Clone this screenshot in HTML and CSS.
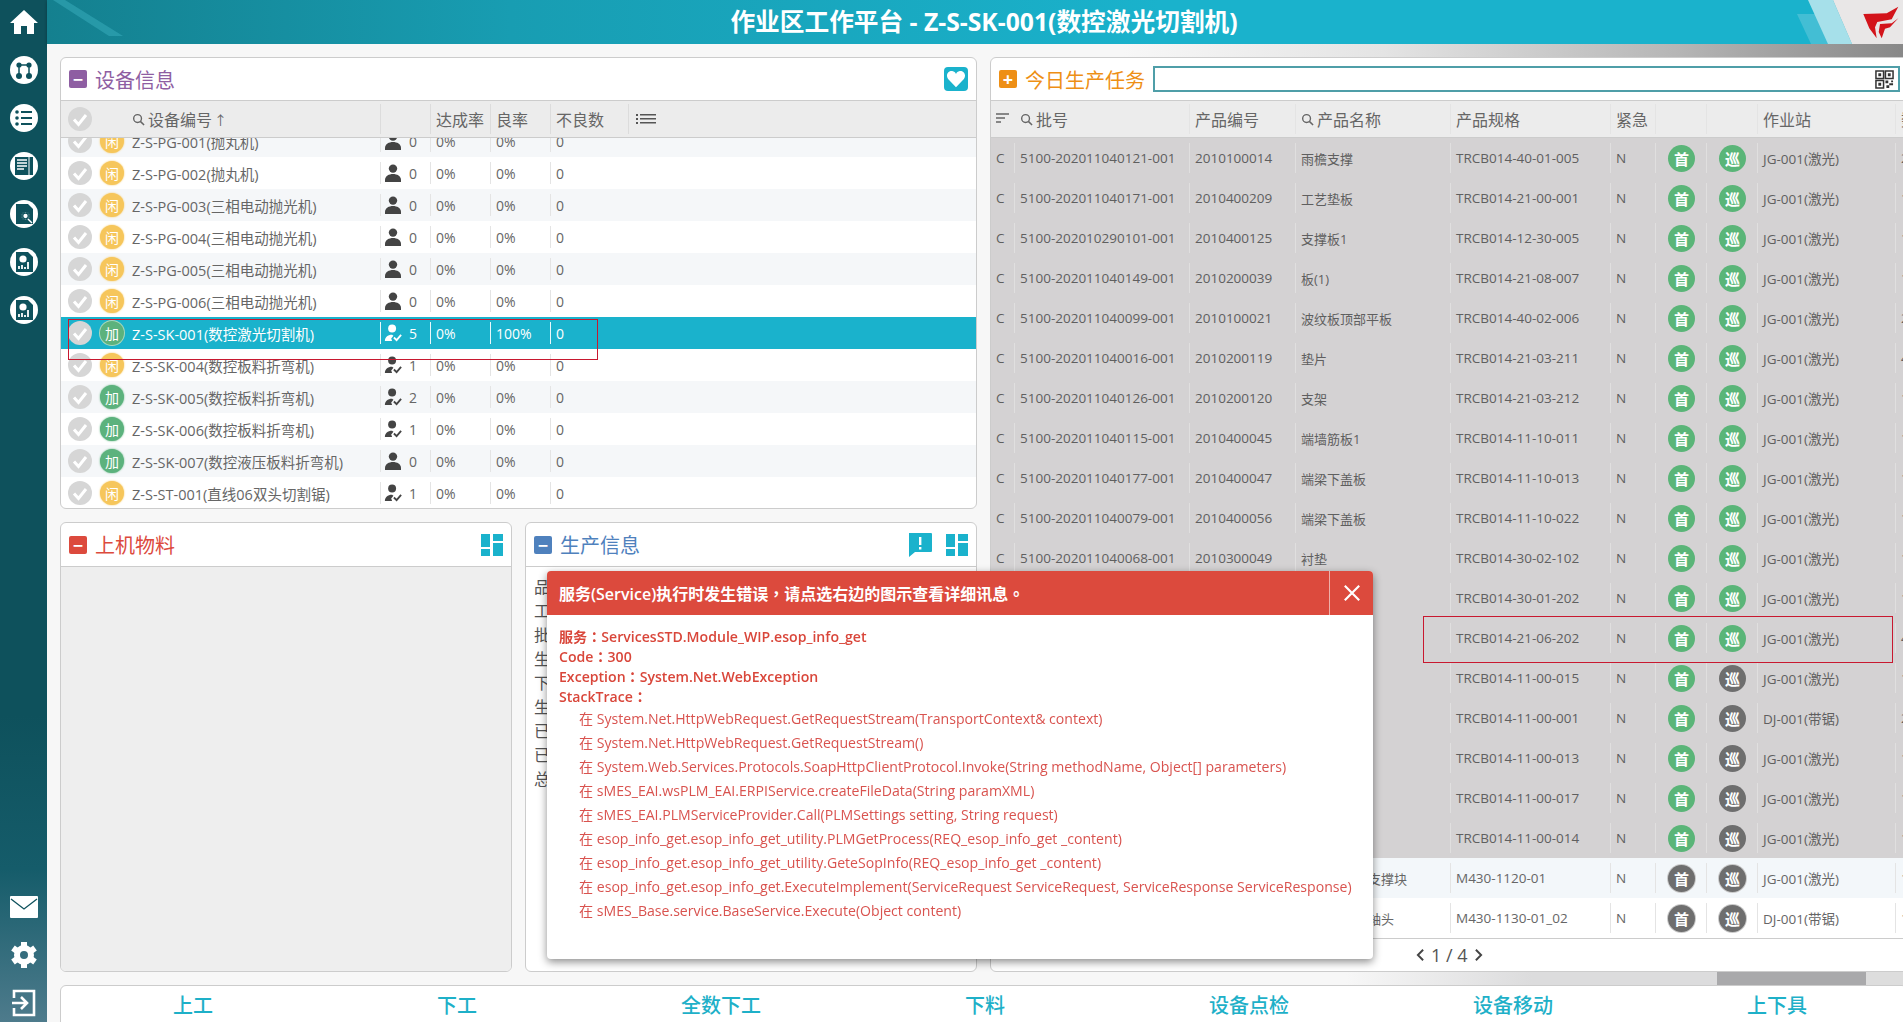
FILE: index.html
```html
<!DOCTYPE html>
<html lang="zh-CN">
<head>
  <meta charset="UTF-8">
  <title>作业区工作平台</title>
  <link rel="stylesheet" href="styles.css">
</head>
<body>
  <svg class="icon-defs" width="0" height="0">
    <symbol id="i-search" viewBox="0 0 14 14"><circle cx="6" cy="6" r="4.2" fill="none" stroke="currentColor" stroke-width="1.5"/><path d="M9 9l4 4" stroke="currentColor" stroke-width="1.6"/></symbol>
    <symbol id="i-check" viewBox="0 0 24 24"><circle cx="12" cy="12" r="12" fill="#d6d6d6"/><path d="M6 12.5l4.5 5L18 8" fill="none" stroke="#fff" stroke-width="3"/></symbol>
    <symbol id="i-person" viewBox="0 0 18 18"><circle cx="9" cy="4.6" r="4.2" fill="currentColor"/><path d="M1 18v-2c0-4 4-6 8-6s8 2 8 6v2z" fill="currentColor"/></symbol>
    <symbol id="i-person-ok" viewBox="0 0 20 20"><circle cx="9" cy="5" r="4.4" fill="currentColor"/><path d="M1 19c0-4 3-7 8-7l1.500 1-2.500 3 1 3z" fill="currentColor"/><path d="M11 15l3 3 5-6" fill="none" stroke="currentColor" stroke-width="2"/></symbol>
    <symbol id="i-dash" viewBox="0 0 22 22"><path d="M0 0h9v13H0zM12 0h10v7H12zM0 15h9v7H0zM12 9h10v13H12z" fill="currentColor"/></symbol>
    <symbol id="i-list" viewBox="0 0 20 12"><path d="M0 1h2v2H0zM4 1h16v1.400H4zM0 5h2v2H0zM4 5h16v1.400H4zM0 9h2v2H0zM4 9h16v1.400H4z" fill="currentColor"/></symbol>
  </svg>

  <aside class="sidebar">
    <nav class="side-group">
      <a class="side-item"><svg viewBox="0 0 28 28"><path d="M14 2L0 15h4v11h7v-8h6v8h7V15h4z" fill="#fff"/></svg></a>
      <a class="side-item"><svg viewBox="0 0 28 28"><circle cx="14" cy="14" r="14" fill="#fff"/><circle cx="9" cy="9" r="2.600" fill="#0e515c"/><circle cx="19" cy="9" r="2.600" fill="#0e515c"/><circle cx="9" cy="20" r="3" fill="#0e515c"/><circle cx="19" cy="20" r="3" fill="#0e515c"/><path d="M9 9h10M9 9v11M19 9v11" stroke="#0e515c" stroke-width="1.500"/></svg></a>
      <a class="side-item"><svg viewBox="0 0 28 28"><circle cx="14" cy="14" r="14" fill="#fff"/><path d="M11 8h11M11 14h11M11 20h11" stroke="#0e515c" stroke-width="2.200"/><circle cx="7" cy="8" r="1.800" fill="#0e515c"/><circle cx="7" cy="14" r="1.800" fill="#0e515c"/><circle cx="7" cy="20" r="1.800" fill="#0e515c"/></svg></a>
      <a class="side-item"><svg viewBox="0 0 28 28"><circle cx="14" cy="14" r="14" fill="#fff"/><path d="M5 5h18v18H5z" fill="#0e515c"/><path d="M7 8h10M7 11h10M7 14h10M7 17h7" stroke="#fff" stroke-width="1.300"/><path d="M19 5v18" stroke="#fff" stroke-width="1"/></svg></a>
      <a class="side-item"><svg viewBox="0 0 28 28"><circle cx="14" cy="14" r="14" fill="#fff"/><path d="M6 4h12l5 5v15H6z" fill="#0e515c"/><circle cx="15.500" cy="16" r="4" fill="#fff" stroke="#0e515c" stroke-width="1"/><circle cx="15.500" cy="16" r="2.800" fill="none" stroke="#0e515c" stroke-width="1.300"/><path d="M18 19l4 4" stroke="#fff" stroke-width="1.500"/></svg></a>
      <a class="side-item"><svg viewBox="0 0 28 28"><circle cx="14" cy="14" r="14" fill="#fff"/><path d="M6 4h12l5 5v15H6z" fill="#0e515c"/><circle cx="13" cy="11" r="3.600" fill="#fff"/><path d="M9 21v-3M12 21v-4M15 21v-2M18 21v-7" stroke="#fff" stroke-width="1.800"/></svg></a>
      <a class="side-item"><svg viewBox="0 0 28 28"><circle cx="14" cy="14" r="14" fill="#fff"/><path d="M6 4h12l5 5v15H6z" fill="#0e515c"/><circle cx="13" cy="11" r="3.600" fill="#fff"/><path d="M9 21v-3M12 21v-4M15 21v-2M18 21v-7" stroke="#fff" stroke-width="1.800"/></svg></a>
    </nav>
    <nav class="side-group">
      <a class="side-item"><svg viewBox="0 0 28 28"><path d="M0 4q0-1 1-1h26q1 0 1 1v20q0 1-1 1H1q-1 0-1-1z" fill="#fff"/><path d="M1 6l13 10L27 6" fill="none" stroke="#0e515c" stroke-width="1.300"/></svg></a>
      <a class="side-item"><svg viewBox="0 0 28 28"><circle cx="14" cy="14" r="7" fill="none" stroke="#fff" stroke-width="6"/><path d="M14 1v5M14 22v5M3 7l4 3M21 18l4 3M3 21l4-3M21 10l4-3" stroke="#fff" stroke-width="6"/></svg></a>
      <a class="side-item"><svg viewBox="0 0 28 28"><path d="M4 9V2h20v24H4v-7" fill="none" stroke="#fff" stroke-width="2.600"/><path d="M2 14h14M11 8l6 6-6 6" fill="none" stroke="#fff" stroke-width="2.600"/></svg></a>
    </nav>
  </aside>

  <div class="main">
    <header class="topbar">
      <svg class="topbar-art" width="1856" height="44" viewBox="0 0 1856 44">
        <path d="M6 0h12l58 36h-14z" fill="#3fb4c4" opacity=".45"/>
        <path d="M1750 14l14 30h36l-20-30z" fill="#5fc6d8" opacity=".6"/>
        <path d="M1761 0h25l19 44h-24z" fill="#a6e0ea"/>
        <path d="M1786 0h70v44h-51z" fill="#e9e7e7"/>
        <path d="M1816.300 14l23.400-.7 11.600-6.600-6.600 12.600-14.400 2.700-2.300 5.300 1.700 11-7.400-10z" fill="#d3141b"/>
        <path d="M1833 24l11.700-.7 6.600-5-8.300 9-5 1.400-3.300 9.600-3-6.300z" fill="#d3141b"/>
      </svg>
      <h1 class="topbar-title">作业区工作平台 - Z-S-SK-001(数控激光切割机)</h1>
    </header>

    <div class="content">
      <section class="panel panel-equip">
        <div class="panel-head">
          <span class="square sq-purple">−</span>
          <h2 class="panel-title t-purple">设备信息</h2>
          <span class="head-tools">
            <span class="heart-btn"><svg viewBox="0 0 24 24" width="20" height="20"><path d="M12 22L2.500 12C-1 7 3 2 7.500 2.500 10 3 11 4 12 6c1-2 2-3 4.500-3.500C21 2 25 7 21.500 12z" fill="#fff"/></svg></span>
          </span>
        </div>
        <div class="eq-row eq-thead">
          <div class="eq-main"><svg class="check-icon"><use href="#i-check"/></svg><span class="eq-sort"><svg class="search-icon"><use href="#i-search"/></svg>设备编号<span class="sort-arrow">↑</span></span></div>
          <div class="cell"></div>
          <div class="cell">达成率</div>
          <div class="cell">良率</div>
          <div class="cell">不良数</div>
          <div class="cell"><svg class="list-icon"><use href="#i-list"/></svg></div>
        </div>
        <div class="eq-body">
          <div class="eq-row"><div class="eq-main"><svg class="check-icon"><use href="#i-check"/></svg><span class="status st-idle">闲</span>Z-S-PG-001(抛丸机)</div><div class="cell"><svg class="person"><use href="#i-person"/></svg>0</div><div class="cell">0%</div><div class="cell">0%</div><div class="cell">0</div></div>
          <div class="eq-row"><div class="eq-main"><svg class="check-icon"><use href="#i-check"/></svg><span class="status st-idle">闲</span>Z-S-PG-002(抛丸机)</div><div class="cell"><svg class="person"><use href="#i-person"/></svg>0</div><div class="cell">0%</div><div class="cell">0%</div><div class="cell">0</div></div>
          <div class="eq-row"><div class="eq-main"><svg class="check-icon"><use href="#i-check"/></svg><span class="status st-idle">闲</span>Z-S-PG-003(三相电动抛光机)</div><div class="cell"><svg class="person"><use href="#i-person"/></svg>0</div><div class="cell">0%</div><div class="cell">0%</div><div class="cell">0</div></div>
          <div class="eq-row"><div class="eq-main"><svg class="check-icon"><use href="#i-check"/></svg><span class="status st-idle">闲</span>Z-S-PG-004(三相电动抛光机)</div><div class="cell"><svg class="person"><use href="#i-person"/></svg>0</div><div class="cell">0%</div><div class="cell">0%</div><div class="cell">0</div></div>
          <div class="eq-row"><div class="eq-main"><svg class="check-icon"><use href="#i-check"/></svg><span class="status st-idle">闲</span>Z-S-PG-005(三相电动抛光机)</div><div class="cell"><svg class="person"><use href="#i-person"/></svg>0</div><div class="cell">0%</div><div class="cell">0%</div><div class="cell">0</div></div>
          <div class="eq-row"><div class="eq-main"><svg class="check-icon"><use href="#i-check"/></svg><span class="status st-idle">闲</span>Z-S-PG-006(三相电动抛光机)</div><div class="cell"><svg class="person"><use href="#i-person"/></svg>0</div><div class="cell">0%</div><div class="cell">0%</div><div class="cell">0</div></div>
          <div class="eq-row selected"><div class="eq-main"><svg class="check-icon"><use href="#i-check"/></svg><span class="status st-work">加</span>Z-S-SK-001(数控激光切割机)</div><div class="cell"><svg class="person"><use href="#i-person-ok"/></svg>5</div><div class="cell">0%</div><div class="cell">100%</div><div class="cell">0</div></div>
          <div class="eq-row"><div class="eq-main"><svg class="check-icon"><use href="#i-check"/></svg><span class="status st-idle">闲</span>Z-S-SK-004(数控板料折弯机)</div><div class="cell"><svg class="person"><use href="#i-person-ok"/></svg>1</div><div class="cell">0%</div><div class="cell">0%</div><div class="cell">0</div></div>
          <div class="eq-row"><div class="eq-main"><svg class="check-icon"><use href="#i-check"/></svg><span class="status st-work">加</span>Z-S-SK-005(数控板料折弯机)</div><div class="cell"><svg class="person"><use href="#i-person-ok"/></svg>2</div><div class="cell">0%</div><div class="cell">0%</div><div class="cell">0</div></div>
          <div class="eq-row"><div class="eq-main"><svg class="check-icon"><use href="#i-check"/></svg><span class="status st-work">加</span>Z-S-SK-006(数控板料折弯机)</div><div class="cell"><svg class="person"><use href="#i-person-ok"/></svg>1</div><div class="cell">0%</div><div class="cell">0%</div><div class="cell">0</div></div>
          <div class="eq-row"><div class="eq-main"><svg class="check-icon"><use href="#i-check"/></svg><span class="status st-work">加</span>Z-S-SK-007(数控液压板料折弯机)</div><div class="cell"><svg class="person"><use href="#i-person"/></svg>0</div><div class="cell">0%</div><div class="cell">0%</div><div class="cell">0</div></div>
          <div class="eq-row"><div class="eq-main"><svg class="check-icon"><use href="#i-check"/></svg><span class="status st-idle">闲</span>Z-S-ST-001(直线06双头切割锯)</div><div class="cell"><svg class="person"><use href="#i-person-ok"/></svg>1</div><div class="cell">0%</div><div class="cell">0%</div><div class="cell">0</div></div>
        </div>
      </section>

      <section class="panel panel-tasks">
        <div class="panel-head">
          <span class="square sq-orange">+</span>
          <h2 class="panel-title t-orange">今日生产任务</h2>
          <div class="scan-box">
            <svg class="qr-icon" viewBox="0 0 20 20" width="19" height="19"><path d="M1 1h8v8H1zM11 1h8v8h-8zM1 11h8v8H1z" fill="none" stroke="#333" stroke-width="1.600"/><path d="M3.500 3.500h3v3h-3zM13.500 3.500h3v3h-3zM3.500 13.500h3v3h-3zM11 11h3v3h-3zM15 14h4v2h-4zM12 16h3v3h-3zM17 11h2v2h-2z" fill="#333"/></svg>
          </div>
        </div>
        <div class="task-row task-thead">
          <div class="task-first"><svg class="sort-icon" viewBox="0 0 14 12" width="14" height="12"><path d="M0 1h13M0 5h9M0 9h5" stroke="#666" stroke-width="1.500"/></svg><svg class="search-icon"><use href="#i-search"/></svg>批号</div>
          <div class="cell">产品编号</div>
          <div class="cell"><svg class="search-icon"><use href="#i-search"/></svg>产品名称</div>
          <div class="cell">产品规格</div>
          <div class="cell">紧急</div>
          <div class="cell"></div>
          <div class="cell"></div>
          <div class="cell">作业站</div>
          <div class="cell">数</div>
        </div>
        <div class="task-body">
          <div class="task-row done"><div class="first">C</div><div class="cell">5100-202011040121-001</div><div class="cell">2010100014</div><div class="cell">雨檐支撑</div><div class="cell">TRCB014-40-01-005</div><div class="cell">N</div><div class="cell"><span class="badge b-green">首</span></div><div class="cell"><span class="badge b-green">巡</span></div><div class="cell">JG-001(激光)</div><div class="cell">2</div></div>
          <div class="task-row done"><div class="first">C</div><div class="cell">5100-202011040171-001</div><div class="cell">2010400209</div><div class="cell">工艺垫板</div><div class="cell">TRCB014-21-00-001</div><div class="cell">N</div><div class="cell"><span class="badge b-green">首</span></div><div class="cell"><span class="badge b-green">巡</span></div><div class="cell">JG-001(激光)</div><div class="cell">1</div></div>
          <div class="task-row done"><div class="first">C</div><div class="cell">5100-202010290101-001</div><div class="cell">2010400125</div><div class="cell">支撑板1</div><div class="cell">TRCB014-12-30-005</div><div class="cell">N</div><div class="cell"><span class="badge b-green">首</span></div><div class="cell"><span class="badge b-green">巡</span></div><div class="cell">JG-001(激光)</div><div class="cell">1</div></div>
          <div class="task-row done"><div class="first">C</div><div class="cell">5100-202011040149-001</div><div class="cell">2010200039</div><div class="cell">板(1)</div><div class="cell">TRCB014-21-08-007</div><div class="cell">N</div><div class="cell"><span class="badge b-green">首</span></div><div class="cell"><span class="badge b-green">巡</span></div><div class="cell">JG-001(激光)</div><div class="cell">1</div></div>
          <div class="task-row done"><div class="first">C</div><div class="cell">5100-202011040099-001</div><div class="cell">2010100021</div><div class="cell">波纹板顶部平板</div><div class="cell">TRCB014-40-02-006</div><div class="cell">N</div><div class="cell"><span class="badge b-green">首</span></div><div class="cell"><span class="badge b-green">巡</span></div><div class="cell">JG-001(激光)</div><div class="cell">2</div></div>
          <div class="task-row done"><div class="first">C</div><div class="cell">5100-202011040016-001</div><div class="cell">2010200119</div><div class="cell">垫片</div><div class="cell">TRCB014-21-03-211</div><div class="cell">N</div><div class="cell"><span class="badge b-green">首</span></div><div class="cell"><span class="badge b-green">巡</span></div><div class="cell">JG-001(激光)</div><div class="cell">4</div></div>
          <div class="task-row done"><div class="first">C</div><div class="cell">5100-202011040126-001</div><div class="cell">2010200120</div><div class="cell">支架</div><div class="cell">TRCB014-21-03-212</div><div class="cell">N</div><div class="cell"><span class="badge b-green">首</span></div><div class="cell"><span class="badge b-green">巡</span></div><div class="cell">JG-001(激光)</div><div class="cell">1</div></div>
          <div class="task-row done"><div class="first">C</div><div class="cell">5100-202011040115-001</div><div class="cell">2010400045</div><div class="cell">端墙筋板1</div><div class="cell">TRCB014-11-10-011</div><div class="cell">N</div><div class="cell"><span class="badge b-green">首</span></div><div class="cell"><span class="badge b-green">巡</span></div><div class="cell">JG-001(激光)</div><div class="cell">1</div></div>
          <div class="task-row done"><div class="first">C</div><div class="cell">5100-202011040177-001</div><div class="cell">2010400047</div><div class="cell">端梁下盖板</div><div class="cell">TRCB014-11-10-013</div><div class="cell">N</div><div class="cell"><span class="badge b-green">首</span></div><div class="cell"><span class="badge b-green">巡</span></div><div class="cell">JG-001(激光)</div><div class="cell">1</div></div>
          <div class="task-row done"><div class="first">C</div><div class="cell">5100-202011040079-001</div><div class="cell">2010400056</div><div class="cell">端梁下盖板</div><div class="cell">TRCB014-11-10-022</div><div class="cell">N</div><div class="cell"><span class="badge b-green">首</span></div><div class="cell"><span class="badge b-green">巡</span></div><div class="cell">JG-001(激光)</div><div class="cell">1</div></div>
          <div class="task-row done"><div class="first">C</div><div class="cell">5100-202011040068-001</div><div class="cell">2010300049</div><div class="cell">衬垫</div><div class="cell">TRCB014-30-02-102</div><div class="cell">N</div><div class="cell"><span class="badge b-green">首</span></div><div class="cell"><span class="badge b-green">巡</span></div><div class="cell">JG-001(激光)</div><div class="cell">1</div></div>
          <div class="task-row done"><div class="first"></div><div class="cell"></div><div class="cell"></div><div class="cell"></div><div class="cell">TRCB014-30-01-202</div><div class="cell">N</div><div class="cell"><span class="badge b-green">首</span></div><div class="cell"><span class="badge b-green">巡</span></div><div class="cell">JG-001(激光)</div><div class="cell">1</div></div>
          <div class="task-row done"><div class="first"></div><div class="cell"></div><div class="cell"></div><div class="cell"></div><div class="cell">TRCB014-21-06-202</div><div class="cell">N</div><div class="cell"><span class="badge b-green">首</span></div><div class="cell"><span class="badge b-green">巡</span></div><div class="cell">JG-001(激光)</div><div class="cell">4</div></div>
          <div class="task-row done"><div class="first"></div><div class="cell"></div><div class="cell"></div><div class="cell"></div><div class="cell">TRCB014-11-00-015</div><div class="cell">N</div><div class="cell"><span class="badge b-green">首</span></div><div class="cell"><span class="badge b-gray">巡</span></div><div class="cell">JG-001(激光)</div><div class="cell">1</div></div>
          <div class="task-row done"><div class="first"></div><div class="cell"></div><div class="cell"></div><div class="cell"></div><div class="cell">TRCB014-11-00-001</div><div class="cell">N</div><div class="cell"><span class="badge b-green">首</span></div><div class="cell"><span class="badge b-gray">巡</span></div><div class="cell">DJ-001(带锯)</div><div class="cell">2</div></div>
          <div class="task-row done"><div class="first"></div><div class="cell"></div><div class="cell"></div><div class="cell"></div><div class="cell">TRCB014-11-00-013</div><div class="cell">N</div><div class="cell"><span class="badge b-green">首</span></div><div class="cell"><span class="badge b-gray">巡</span></div><div class="cell">JG-001(激光)</div><div class="cell">1</div></div>
          <div class="task-row done"><div class="first"></div><div class="cell"></div><div class="cell"></div><div class="cell"></div><div class="cell">TRCB014-11-00-017</div><div class="cell">N</div><div class="cell"><span class="badge b-green">首</span></div><div class="cell"><span class="badge b-gray">巡</span></div><div class="cell">JG-001(激光)</div><div class="cell">1</div></div>
          <div class="task-row done"><div class="first"></div><div class="cell"></div><div class="cell"></div><div class="cell"></div><div class="cell">TRCB014-11-00-014</div><div class="cell">N</div><div class="cell"><span class="badge b-green">首</span></div><div class="cell"><span class="badge b-gray">巡</span></div><div class="cell">JG-001(激光)</div><div class="cell">1</div></div>
          <div class="task-row alt"><div class="first"></div><div class="cell"></div><div class="cell"></div><div class="cell"><span class="name-tail">支撑块</span></div><div class="cell">M430-1120-01</div><div class="cell">N</div><div class="cell"><span class="badge b-gray ring">首</span></div><div class="cell"><span class="badge b-gray ring">巡</span></div><div class="cell">JG-001(激光)</div><div class="cell">1</div></div>
          <div class="task-row"><div class="first"></div><div class="cell"></div><div class="cell"></div><div class="cell"><span class="name-tail">轴头</span></div><div class="cell">M430-1130-01_02</div><div class="cell">N</div><div class="cell"><span class="badge b-gray ring">首</span></div><div class="cell"><span class="badge b-gray ring">巡</span></div><div class="cell">DJ-001(带锯)</div><div class="cell">1</div></div>
        </div>
        <div class="pager">
          <svg viewBox="0 0 10 16" width="9" height="14"><path d="M8 2L2 8l6 6" fill="none" stroke="#444" stroke-width="2.200"/></svg>
          <span>1 / 4</span>
          <svg viewBox="0 0 10 16" width="9" height="14"><path d="M2 2l6 6-6 6" fill="none" stroke="#444" stroke-width="2.200"/></svg>
        </div>
      </section>

      <div class="lower">
        <section class="panel">
          <div class="panel-head lower-head">
            <span class="square sq-red">−</span>
            <h2 class="panel-title t-red">上机物料</h2>
            <span class="head-tools"><svg class="dash-icon"><use href="#i-dash"/></svg></span>
          </div>
          <div class="material-body"></div>
        </section>
        <section class="panel">
          <div class="panel-head lower-head">
            <span class="square sq-blue">−</span>
            <h2 class="panel-title t-blue">生产信息</h2>
            <span class="head-tools">
              <svg class="alert-icon" viewBox="0 0 24 24" width="24" height="24"><path d="M1 0h22q1 0 1 1v17q0 1-1 1H7l-6 5z" fill="#1ab2cc"/><path d="M11 4h2.400v8H11zM11 14h2.400v2.400H11z" fill="#fff"/></svg>
              <svg class="dash-icon"><use href="#i-dash"/></svg>
            </span>
          </div>
          <div class="info-body">
            <div>品</div><div>工</div><div>批</div><div>生</div><div>下</div><div>生</div><div>已</div><div>已</div><div>总</div>
          </div>
        </section>
      </div>

      <div class="mark mark-equip"></div>
      <div class="mark mark-task"></div>
    </div>

    <footer class="actions">
      <a>上工</a><a>下工</a><a>全数下工</a><a>下料</a><a>设备点检</a><a>设备移动</a><a>上下具</a>
    </footer>
  </div>

  <div class="modal" lang="zh-TW">
    <div class="modal-head">
      <span class="modal-title">服务(Service)执行时发生错误，请点选右边的图示查看详细讯息。</span>
      <span class="modal-close"><svg viewBox="0 0 20 20" width="18" height="18"><path d="M2 2l16 16M18 2L2 18" stroke="#fff" stroke-width="2.400"/></svg></span>
    </div>
    <div class="modal-body">
      <p>服务：ServicesSTD.Module_WIP.esop_info_get</p>
      <p>Code：300</p>
      <p>Exception：System.Net.WebException</p>
      <p>StackTrace：</p>
      <ul class="stack">
        <li>在 System.Net.HttpWebRequest.GetRequestStream(TransportContext&amp; context)</li>
        <li>在 System.Net.HttpWebRequest.GetRequestStream()</li>
        <li>在 System.Web.Services.Protocols.SoapHttpClientProtocol.Invoke(String methodName, Object[] parameters)</li>
        <li>在 sMES_EAI.wsPLM_EAI.ERPIService.createFileData(String paramXML)</li>
        <li>在 sMES_EAI.PLMServiceProvider.Call(PLMSettings setting, String request)</li>
        <li>在 esop_info_get.esop_info_get_utility.PLMGetProcess(REQ_esop_info_get _content)</li>
        <li>在 esop_info_get.esop_info_get_utility.GeteSopInfo(REQ_esop_info_get _content)</li>
        <li>在 esop_info_get.esop_info_get.ExecuteImplement(ServiceRequest ServiceRequest, ServiceResponse ServiceResponse)</li>
        <li>在 sMES_Base.service.BaseService.Execute(Object content)</li>
      </ul>
    </div>
  </div>
</body>
</html>
```

FILE: styles.css
```css
* {
  box-sizing: border-box;
}

html, body {
  height: 100%;
}

body {
  margin: 0;
  display: flex;
  overflow: hidden;
  font-family: "Open Sans", "Noto Sans CJK TC", sans-serif;
  font-size: 14px;
  color: #666;
  background-color: #f7f7f7;
}

.icon-defs {
  position: absolute;
}

/* sidebar */
.sidebar {
  width: 47px;
  flex: none;
  display: flex;
  flex-direction: column;
  justify-content: space-between;
  padding: 8px 0 5px;
  background: linear-gradient(180deg, #0e515c 0%, #0e515c 70%, #155c6a 85%, #4e7b8c 100%);
}

.side-group {
  display: flex;
  flex-direction: column;
  align-items: center;
  gap: 20px;
}

.side-item {
  display: block;
  width: 28px;
  height: 28px;
}

.side-item svg {
  display: block;
  width: 28px;
  height: 28px;
}

/* top bar */
.main {
  flex: 1;
  min-width: 0;
  display: flex;
  flex-direction: column;
}

.topbar {
  position: relative;
  height: 44px;
  flex: none;
  overflow: hidden;
  background: linear-gradient(90deg, #14808f 0%, #189db2 25%, #1ab2cc 60%, #1ab2cc 100%);
  box-shadow: 0 1px 3px rgba(0, 0, 0, 0.3);
}

.topbar-art {
  position: absolute;
  left: 0;
  top: 0;
}

.topbar-title {
  position: relative;
  margin: 0;
  padding-left: 18px;
  text-align: center;
  font-size: 24.7px;
  line-height: 44px;
  font-weight: 700;
  color: #fff;
}

/* content grid */
.content {
  position: relative;
  flex: none;
  display: grid;
  grid-template-columns: 917px 920px;
  grid-template-rows: 452px 450px;
  gap: 13px;
  padding: 13px 0 13px 13px;
  background:
    linear-gradient(90deg, #f7f7f7 58%, #e4e4e4 72%, #b5b5b5 88%, #888 100%) top / 100% 13px no-repeat,
    linear-gradient(90deg, #f7f7f7 70%, #dcdcdd 80%, #dcdcdd 90%, #a9a9ab 90%, #a9a9ab 98%, #dddddd 98%) bottom / 100% 13px no-repeat,
    #f7f7f7;
}

.panel {
  display: flex;
  flex-direction: column;
  overflow: hidden;
  min-width: 0;
  background-color: #fff;
  border: 1px solid #ccc;
  border-radius: 6px;
}

.panel-tasks {
  grid-column: 2;
  grid-row: 1 / 3;
}

.lower {
  grid-column: 1;
  grid-row: 2;
  display: grid;
  grid-template-columns: 452px 452px;
  gap: 13px;
}

.panel-head {
  height: 43px;
  flex: none;
  display: flex;
  align-items: center;
  padding-left: 8px;
  border-bottom: 1px solid #ccc;
}

.lower-head {
  height: 44px;
}

.square {
  width: 18px;
  height: 18px;
  flex: none;
  display: flex;
  align-items: center;
  justify-content: center;
  margin-right: 8px;
  border-radius: 2px;
  color: #fff;
  font-size: 18px;
  font-weight: 700;
  line-height: 1;
}

.sq-purple { background-color: #8e5ea2; }
.sq-orange { background-color: #ee8f15; }
.sq-red { background-color: #dc4a3d; }
.sq-blue { background-color: #4f81bd; }

.panel-title {
  margin: 0;
  font-size: 20px;
  font-weight: 400;
  white-space: nowrap;
}

.t-purple { color: #8e5ea2; }
.t-orange { color: #ee8f15; }
.t-red { color: #dc4a3d; }
.t-blue { color: #4f81bd; }

.head-tools {
  margin-left: auto;
  display: flex;
  align-items: center;
  gap: 14px;
  padding-right: 8px;
  color: #1ab2cc;
}

.heart-btn {
  width: 24px;
  height: 24px;
  display: flex;
  align-items: center;
  justify-content: center;
  border-radius: 4px;
  background-color: #1ab2cc;
}

.dash-icon {
  width: 22px;
  height: 22px;
}

/* shared cell */
.cell {
  height: 22px;
  min-width: 0;
  display: flex;
  align-items: center;
  padding-left: 5px;
  white-space: nowrap;
  border-left: 1px solid #e4e4e4;
}

.check-icon {
  width: 24px;
  height: 24px;
  flex: none;
}

.search-icon {
  width: 13px;
  height: 13px;
  flex: none;
  margin-right: 3px;
  color: #666;
}

.list-icon {
  width: 20px;
  height: 12px;
  margin-left: 2px;
  color: #555;
}

/* equipment table */
.eq-row {
  height: 32px;
  display: grid;
  grid-template-columns: 319px 50px 60px 60px 78px 1fr;
  align-items: center;
}

.eq-row:nth-child(odd) {
  background-color: #f5f7f9;
}

.eq-thead {
  height: 37px;
  flex: none;
  font-size: 16px;
  border-bottom: 1px solid #ccc;
}

.eq-thead.eq-row {
  background-color: #ececec;
}

.eq-thead .cell {
  height: 30px;
  border-left-color: #dcdcdc;
}

.eq-main {
  display: flex;
  align-items: center;
  gap: 8px;
  padding-left: 7px;
  white-space: nowrap;
  font-size: 14.5px;
}

.eq-thead .eq-main {
  font-size: 16px;
}

.eq-sort {
  display: flex;
  align-items: center;
  margin-left: 32px;
}

.sort-arrow {
  margin-left: 2px;
  font-size: 13px;
}

.eq-body {
  flex: 1;
  overflow: hidden;
}

.eq-body .eq-row:first-child {
  margin-top: -13px;
}

.status {
  width: 24px;
  height: 24px;
  flex: none;
  display: flex;
  align-items: center;
  justify-content: center;
  border-radius: 50%;
  color: #fff;
  font-size: 14px;
}

.st-idle {
  background-color: #f6c65b;
  box-shadow: 0 0 2px #f6c65b;
}

.st-work {
  background-color: #5cb27d;
  box-shadow: 0 0 2px #5cb27d;
}

.person {
  width: 18px;
  height: 18px;
  flex: none;
  margin: 0 7px 0 -2px;
  color: #444;
}

.eq-row.selected {
  background-color: #1ab2cc;
  color: #fff;
}

.selected .cell {
  border-left-color: #e8f8fb;
}

.selected .person {
  color: #fff;
}

.selected .st-work {
  box-shadow: 0 0 0 1px #a9d8bd;
}

/* task table */
.scan-box {
  flex: 1;
  height: 26px;
  margin-left: 8px;
  margin-right: 9px;
  display: flex;
  align-items: center;
  justify-content: flex-end;
  padding-right: 4px;
  border: 2px solid #4f9ea8;
  background-color: #fff;
}

.task-row {
  height: 40px;
  display: grid;
  grid-template-columns: 23px 175px 106px 155px 160px 45px 51px 51px 138px 1fr;
  align-items: center;
  font-size: 13.5px;
}

.task-row .cell {
  height: 30px;
}

.task-row > .cell:nth-child(4) {
  font-size: 13px;
}

.task-row.done {
  background-color: #d4d2d3;
  color: #5f5f5f;
}

.task-row.done .cell {
  border-left-color: #e0dfdf;
}

.task-row.alt {
  background-color: #f3f7fa;
}

.task-row.task-thead {
  height: 37px;
  flex: none;
  grid-template-columns: 198px 106px 155px 160px 45px 51px 51px 138px 1fr;
  font-size: 16px;
  background-color: #ececec;
  border-bottom: 1px solid #ccc;
}

.task-row.task-thead > .cell {
  font-size: 16px;
}

.task-first {
  display: flex;
  align-items: center;
  padding-left: 5px;
}

.sort-icon {
  flex: none;
  margin-right: 10px;
}

.first {
  padding-left: 5px;
}

.task-body {
  flex: none;
}

.name-tail {
  margin-left: 67px;
}

.badge {
  width: 27px;
  height: 27px;
  margin-left: 7px;
  display: flex;
  align-items: center;
  justify-content: center;
  border-radius: 50%;
  color: #fff;
  font-size: 15px;
  font-weight: 700;
}

.b-green { background-color: #5ab578; }
.b-gray { background-color: #6e6e6e; }

.ring {
  box-shadow: 0 0 0 1px #c9c9c9;
}

.pager {
  flex: 1;
  display: flex;
  align-items: center;
  gap: 6px;
  padding-left: 425px;
  font-size: 18px;
  color: #555;
  border-top: 1px solid #ccc;
}

/* lower panels */
.material-body {
  flex: 1;
  background-color: #eee;
}

.info-body {
  flex: 1;
  padding: 8px 0 0 8px;
  font-size: 16px;
  line-height: 24px;
  color: #555;
}

/* red outlines drawn over the tables */
.mark {
  position: absolute;
  border: 1px solid #c8182f;
  pointer-events: none;
}

.mark-equip {
  left: 21px;
  top: 275px;
  width: 530px;
  height: 41px;
}

.mark-task {
  left: 1376px;
  top: 572px;
  width: 470px;
  height: 47px;
}

/* bottom action bar */
.actions {
  width: 1848px;
  margin-left: 13px;
  flex: none;
  height: 50px;
  display: grid;
  grid-template-columns: repeat(7, 264px);
  background-color: #fff;
  border: 1px solid #ccc;
  border-radius: 6px 6px 0 0;
}

.actions a {
  text-align: center;
  font-size: 20px;
  line-height: 40px;
  font-weight: 500;
  color: #1eb0c8;
}

/* error dialog */
.modal {
  position: fixed;
  left: 547px;
  top: 571px;
  width: 826px;
  height: 388px;
  border-radius: 4px;
  overflow: hidden;
  background-color: #fff;
  box-shadow: 0 3px 8px rgba(0, 0, 0, 0.45);
}

.modal-head {
  height: 44px;
  display: flex;
  align-items: center;
  padding-left: 12px;
  background-color: #dc4a3d;
  color: #fff;
}

.modal-title {
  flex: 1;
  font-size: 16px;
  font-weight: 600;
}

.modal-close {
  width: 44px;
  height: 44px;
  display: flex;
  align-items: center;
  justify-content: center;
  border-left: 1px solid #eeb0a9;
}

.modal-body {
  padding: 12px 12px 0;
  font-size: 14.1px;
  font-weight: 600;
  line-height: 20px;
  color: #d9463a;
}

.modal-body p {
  margin: 0;
}

.stack {
  margin: 0;
  padding: 0 0 0 20px;
  list-style: none;
  font-weight: 400;
  line-height: 24px;
  color: #d9534f;
}
```
